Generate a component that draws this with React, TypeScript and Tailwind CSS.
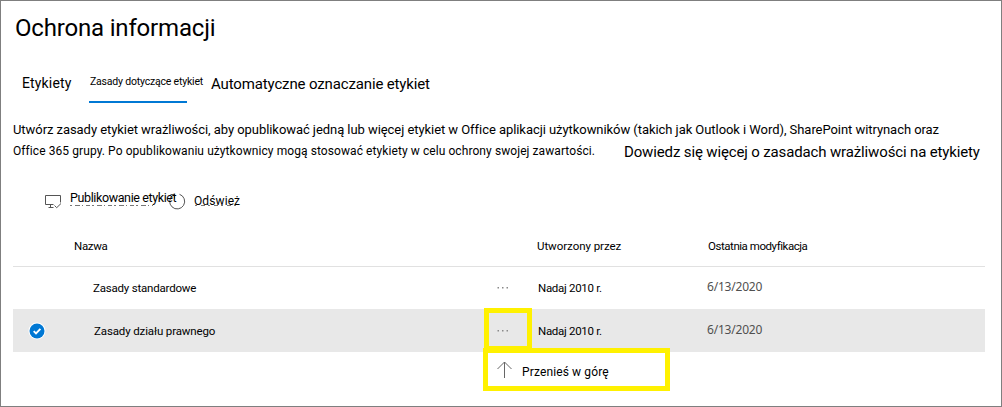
import type { ReactNode } from "react";

function MonitorCheckIcon() {
  return (
    <svg width="17" height="14" viewBox="0 0 17 14" fill="none" stroke="#555" strokeWidth="1">
      <path d="M8.500 9.500H.5V.5h15v7M3.500 12.500h5M5.500 9.500v3M9.500 10.500l2.200 2.200L16 8.500" />
    </svg>
  );
}

function RefreshIcon() {
  return (
    <svg width="17" height="17" viewBox="0 0 17 17" fill="none" stroke="#555" strokeWidth="1">
      <path d="M10.500 1.300A7.500 7.500 0 1 1 4 2.200M1.500 1.500h4v4" />
    </svg>
  );
}

function Dots() {
  return (
    <svg width="12" height="2" viewBox="0 0 12 2" fill="#8a8a8a">
      <path d="M.5 0H2v1.500H.5zM5 0h1.500v1.500H5zM9.500 0H11v1.500H9.500z" />
    </svg>
  );
}

function Row({ selected, name, menu }: { selected?: boolean; name: ReactNode; menu?: ReactNode }) {
  return (
    <div className={selected ? "flex h-[43px] bg-[#e8e8e8] pt-[1px]" : "flex h-[42px]"}>
      <div className="flex w-[80px] items-center pl-[15px]">
        {selected && (
          <svg width="18" height="18" viewBox="0 0 18 18">
            <circle cx="9" cy="9" r="8.500" fill="#fff" />
            <circle cx="9" cy="9" r="7.500" fill="#0078d4" />
            <path d="M5.700 9.200l2.300 2.300 4.400-4.600" fill="none" stroke="#fff" strokeWidth="1.900" />
          </svg>
        )}
      </div>
      {name}
      <div className="relative w-[41px] pt-[20px]">
        <Dots />
        {menu}
      </div>
      <div className="w-[169px] pt-[11px] tracking-[-0.3px]">Nadaj 2010 r.</div>
      <div className="pt-[10px] font-['Noto_Sans'] text-[12px] tracking-[-0.2px] text-[#505050]">6/13/2020</div>
    </div>
  );
}

export default function App() {
  return (
    <div className="h-[407px] w-[1002px] overflow-hidden whitespace-nowrap border border-[#7f7f7f] bg-white font-['Roboto',sans-serif] text-[11.5px] leading-[20px] text-black">
      <h1 className="mt-[11px] ml-[14px] text-[24px] leading-[32px] tracking-[-0.18px]">Ochrona informacji</h1>

      <nav className="mt-[27px] flex h-[32px]">
        <span className="w-[88px] pt-[2px] pl-[21px] text-[14px] tracking-[0.15px]">Etykiety</span>
        <div className="flex w-[122px] flex-col justify-between">
          <span className="pt-[1px] pl-[1px] text-[10.5px] tracking-[-0.2px]">Zasady dotyczące etykiet</span>
          <span className="h-[2px] w-[98px] bg-[#0078d4]" />
        </div>
        <span className="pt-[3px] text-[15px] tracking-[-0.14px]">Automatyczne oznaczanie etykiet</span>
      </nav>

      <section className="mt-[17px] pl-[12px]">
        <p className="text-[13px] tracking-[-0.058px]">
          Utwórz zasady etykiet wrażliwości, aby opublikować jedną lub więcej etykiet w Office aplikacji użytkowników
          (takich jak Outlook i Word), SharePoint witrynach oraz
        </p>
        <div className="flex pt-[1px]">
          <p className="w-[611px] text-[12px] tracking-[0.08px]">
            Office 365 grupy. Po opublikowaniu użytkownicy mogą stosować etykiety w celu ochrony swojej zawartości.
          </p>
          <a className="pt-[1px] text-[15px] tracking-[-0.14px]">Dowiedz się więcej o zasadach wrażliwości na etykiety</a>
        </div>
      </section>

      <div className="mt-[26px] flex h-[23px] pl-[44px]">
        <div className="w-[25px] pt-[7px]">
          <MonitorCheckIcon />
        </div>
        <div className="relative w-[99px] text-[12.5px] tracking-[-0.38px]">
          Publikowanie etykiet
          <svg className="absolute top-[17px] left-0" width="84" height="2" viewBox="0 0 84 2" fill="none" stroke="#777">
            <path d="M0 .5h83" strokeDasharray="2 3 5 2 1 3 4 2" />
          </svg>
        </div>
        <div className="w-[25px] pt-[5px]">
          <RefreshIcon />
        </div>
        <div className="relative pt-[3px] text-[12px] tracking-[0.1px]">
          Odśwież
          <svg className="absolute top-[17px] left-0" width="46" height="2" viewBox="0 0 46 2" fill="none" stroke="#777">
            <path d="M1 .5h44" strokeDasharray="2 4 4 3" />
          </svg>
        </div>
      </div>

      <div className="ml-[12px] w-[972px]">
        <div className="flex h-[56px] border-b border-[#e1e1e1] pt-[25px]">
          <span className="w-[524px] pl-[61px] tracking-[-0.3px]">Nazwa</span>
          <span className="w-[171px] tracking-[-0.05px]">Utworzony przez</span>
          <span className="tracking-[-0.45px]">Ostatnia modyfikacja</span>
        </div>
        <Row name={<div className="w-[404px] pt-[11px] tracking-[-0.2px]">Zasady standardowe</div>} />
        <Row
          selected
          name={<div className="w-[404px] pt-[11px] pl-[1px] tracking-[-0.13px]">Zasady działu prawnego</div>}
          menu={
            <>
              <div className="absolute top-[-2px] left-[-13px] h-[43px] w-[48px] border-[5px] border-[#fff100]" />
              <div className="absolute top-[38px] left-[-14px] flex h-[43px] w-[187px] border-[5px] border-[#fff100] bg-white pl-[9px]">
                <svg width="15" height="17" viewBox="0 0 15 17" className="mt-[8px]" fill="none" stroke="#666">
                  <path d="M7.500 17V1M.5 8l7-7 7 7" />
                </svg>
                <span className="pt-[9px] pl-[10px] text-[12px] tracking-[0.13px]">Przenieś w górę</span>
              </div>
            </>
          }
        />
      </div>
    </div>
  );
}
